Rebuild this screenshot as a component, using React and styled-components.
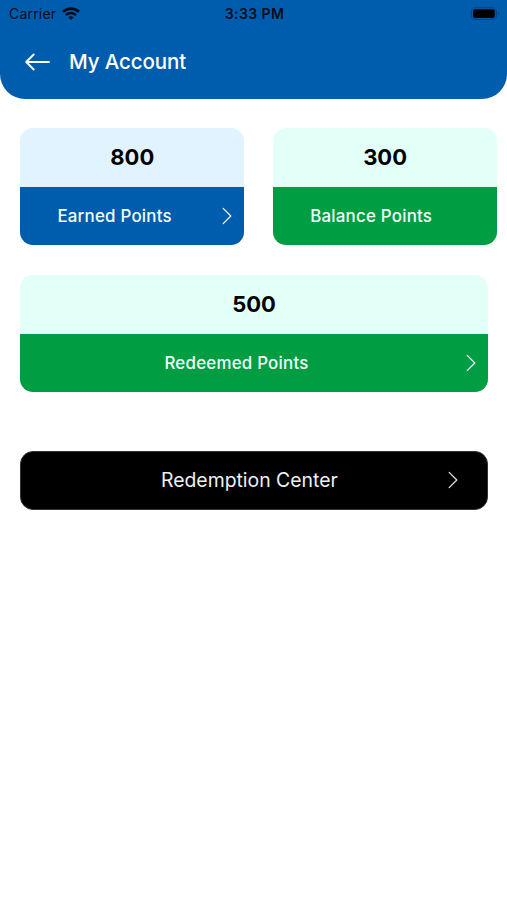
import React from "react";
import styled, {createGlobalStyle} from "styled-components";

const GlobalStyle = createGlobalStyle`
  * { box-sizing: border-box; }
  body {
    margin: 0;
    background: #fff;
    font-family: Inter, "Liberation Sans", sans-serif;
  }
`;
const Screen = styled('div')`
  min-height: 900px;
  background: #fff;
`;
const Header = styled('header')`
  height: 98.5px;
  background: #005dae;
  border-radius: 0 0 25px 25px;
`;
const StatusBar = styled('div')`
  display: grid;
  grid-template-columns: 1fr auto 1fr;
  align-items: center;
  height: 27px;
  padding: 0 7px 0 9px;
  font-size: 14px;
  line-height: 27px;
  color: #020d1c;
`;
const Carrier = styled('div')`
  display: flex;
  align-items: center;
  gap: 6px;
  letter-spacing: 0.2px;
`;
const Time = styled('div')`
  font-weight: 600;
  letter-spacing: 0.4px;
`;
const Battery = styled('svg')`
  justify-self: end;
`;
const TitleBar = styled('div')`
  display: flex;
  align-items: center;
  gap: 19px;
  height: 70px;
  padding-left: 25px;
`;
const Title = styled('h1')`
  margin: 0;
  font-size: 20.5px;
  font-weight: 550;
  line-height: 26px;
  letter-spacing: -0.1px;
  color: #fff;
`;
const Content = styled('main')`
  padding: 29.5px 10px 0 20.4px;
`;
const CardRow = styled('div')`
  display: flex;
  gap: 29px;
  margin-bottom: 30px;
`;
const Card = styled('section')`
  width: ${props => props.$wide ? '467.4px' : '224px'};
  height: 117px;
  border-radius: 13px;
  overflow: hidden;
`;
const Value = styled('div')`
  height: 58.5px;
  background: ${props => props.$color};
  font-size: 22px;
  font-weight: 700;
  line-height: 58.5px;
  text-align: center;
  color: #000;
`;
const Footer = styled('div')`
  display: flex;
  align-items: center;
  justify-content: space-between;
  height: 58.5px;
  padding: 0 12px 0 ${props => props.$indent}px;
  background: ${props => props.$color};
`;
const Label = styled('span')`
  font-size: 16.9px;
  font-weight: 550;
  letter-spacing: 0.22px;
  white-space: nowrap;
  color: #f2fff8;
`;
const RedemptionButton = styled('button')`
  display: flex;
  align-items: center;
  justify-content: space-between;
  width: 467.4px;
  height: 59px;
  margin-top: 58.5px;
  padding: 0 29px 0 139.6px;
  border: 1px solid #333;
  border-radius: 13px;
  background: #000;
  font-family: inherit;
  font-size: 19.4px;
  color: #f0f0f0;
`;

const WifiIcon = () => <svg width="18" height="14" viewBox="0 0 18 14" fill="none" stroke="#020d1c" strokeWidth="2.7">
  <path d="M1 4.8C5.5.5 12.5.5 17 4.8" />
  <path d="M4 8c3-2.7 7-2.7 10 0" />
  <path d="M6.3 10.3c1.7-1.5 3.7-1.5 5.4 0L9 13z" fill="#020d1c" stroke="none" />
</svg>;

const BatteryIcon = () => <Battery width="30" height="14" viewBox="0 0 30 14">
  <rect x="1.4" y=".8" width="25" height="11.6" rx="3.6" fill="none" stroke="#034583" strokeWidth="1.1" />
  <rect x="3" y="2.2" width="21.8" height="8.8" rx="2" fill="#000" />
  <path d="M27.8 4.8v4c1.8-.8 1.8-3.2 0-4z" fill="#034583" />
</Battery>;

const BackArrow = () => <svg width="25" height="18" viewBox="0 0 25 18" fill="none" stroke="#f2fbff" strokeWidth="1.9" strokeLinecap="round" strokeLinejoin="round">
  <path d="M24 9H1.2M8.7 1.5L1.2 9l7.5 7.5" />
</svg>;

const Chevron = ({color = "#e6f7ff"}) => <svg width="10" height="18" viewBox="0 0 10 18" fill="none" stroke={color} strokeWidth="1.3" strokeLinecap="round" strokeLinejoin="round">
  <path d="M1.2 1.4L8.8 9l-7.6 7.6" />
</svg>;

const PointsCard = ({value, label, tint, color, indent, wide, arrow}) => <Card $wide={wide}>
  <Value $color={tint}>{value}</Value>
  <Footer $color={color} $indent={indent}>
    <Label>{label}</Label>
    {arrow && <Chevron />}
  </Footer>
</Card>;

const App = () => <React.Fragment>
  <GlobalStyle />
  <Screen>
    <Header>
      <StatusBar>
        <Carrier>Carrier <WifiIcon /></Carrier>
        <Time>3:33 PM</Time>
        <BatteryIcon />
      </StatusBar>
      <TitleBar>
        <BackArrow />
        <Title>My Account</Title>
      </TitleBar>
    </Header>
    <Content>
      <CardRow>
        <PointsCard value="800" label="Earned Points" tint="#e0f3ff" color="#005dae" indent={37} arrow />
        <PointsCard value="300" label="Balance Points" tint="#e2fff8" color="#009d43" indent={37} />
      </CardRow>
      <PointsCard value="500" label="Redeemed Points" tint="#e2fff8" color="#009d43" indent={144} wide arrow />
      <RedemptionButton>
        Redemption Center
        <Chevron color="#e0e0e0" />
      </RedemptionButton>
    </Content>
  </Screen>
</React.Fragment>;

export default App;
